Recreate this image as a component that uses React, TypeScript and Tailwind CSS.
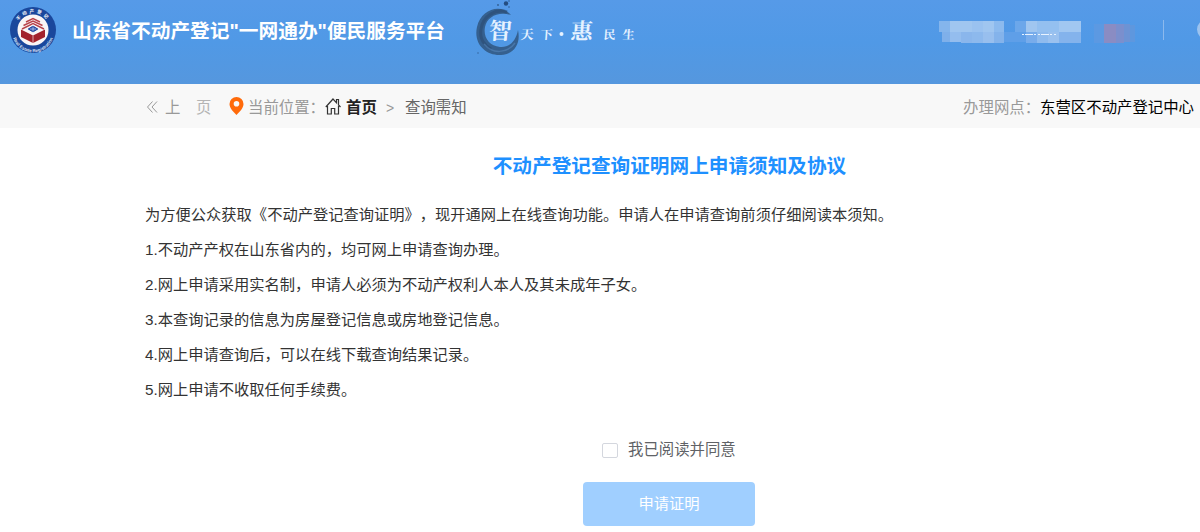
import { useState } from 'react'

const NOTICES = [
  '为方便公众获取《不动产登记查询证明》，现开通网上在线查询功能。申请人在申请查询前须仔细阅读本须知。',
  '1.不动产产权在山东省内的，均可网上申请查询办理。',
  '2.网上申请采用实名制，申请人必须为不动产权利人本人及其未成年子女。',
  '3.本查询记录的信息为房屋登记信息或房地登记信息。',
  '4.网上申请查询后，可以在线下载查询结果记录。',
  '5.网上申请不收取任何手续费。'
]

// Masked user info: x, y, width, height, fill
const MASK: [number, number, number, number, string][] = [
  [0, 0, 11, 11, '#84b5ec'],
  [11, 0, 22, 11, '#a0c6f0'],
  [33, 0, 11, 11, '#9ac2f0'],
  [44, 0, 11, 11, '#a0c6f0'],
  [55, 0, 10, 11, '#8cbaee'],
  [3, 11, 8, 10, '#7fb0ea'],
  [11, 11, 11, 10, '#94bdee'],
  [22, 11, 11, 11, '#8ab6ec'],
  [33, 11, 11, 11, '#8db9ed'],
  [44, 11, 11, 11, '#98bfee'],
  [55, 11, 10, 11, '#84b3eb'],
  [65, 11, 22, 10, '#5f9fe8'],
  [76, 0, 11, 11, '#6ca7ea'],
  [87, 0, 11, 11, '#a0c6f0'],
  [98, 0, 22, 11, '#94c0f0'],
  [120, 0, 22, 11, '#a1c7f1'],
  [87, 11, 11, 11, '#78aceb'],
  [98, 11, 11, 11, '#8fbbee'],
  [109, 11, 11, 11, '#9ac1ef'],
  [120, 11, 22, 11, '#84b3ec'],
  [155, 3, 10, 19, '#5c99e2'],
  [165, 3, 12, 19, '#8a8cc3'],
  [177, 3, 8, 19, '#7b8fcd'],
  [185, 3, 6, 18, '#6d93d4'],
  [191, 4, 5, 17, '#5e97de']
]

function Emblem() {
  return (
    <svg className="w-[46px] h-[46px] shrink-0" viewBox="0 0 46 46">
      <defs>
        <path id="arcTop" d="M6.500 22a16.500 16.500 0 0 1 33 0" />
        <path id="arcBottom" d="M1.700 24a21.300 21.300 0 0 0 42.600 0" />
      </defs>
      <circle cx="23" cy="23" r="23" fill="#1a479c" />
      <circle cx="23" cy="23" r="15.500" fill="#faf5f6" />
      <text fontSize="4.500" fontWeight="700" fill="#fff" letterSpacing="2.500" textAnchor="middle">
        <textPath href="#arcTop" startOffset="50%">不动产登记</textPath>
      </text>
      <text fontSize="4.500" fontWeight="700" fill="#d5e0f6" textAnchor="middle">
        <textPath href="#arcBottom" startOffset="50%">Real Estate Registration</textPath>
      </text>
      <g fill="none" stroke="#b8434b" strokeWidth="1.400">
        <path d="M16 15l7-3.500 7 3.500" />
        <path d="M13.500 18.500l9.500-4.500 9.500 4.500" />
        <path d="M12 22l11-5.500L34 22" />
      </g>
      <path d="M11 22.500l12 6v7.500l-12-6zM35 22.500l-12 6v7.500l12-6z" fill="#a3222d" />
      <path d="M23 28.500v7.500" stroke="#e9c4c9" strokeWidth="0.8" />
      <path d="M23 18l6.500 4-6.500 4-6.500-4z" fill="#2a4fa6" stroke="#fff" />
      <path d="M23 19.500v5M20 22h6" stroke="#dce6ff" strokeWidth="0.6" />
    </svg>
  )
}

function Slogan() {
  return (
    <svg className="w-[164px] h-[60px] shrink-0" viewBox="0 0 164 60">
      <path
        d="M35 15C25 3 5 9 1 27C-3 45 11 56 25 55C38 54 45 44 42 30C40 41 33 48 24 47C13 46 7 37 9 27C11 17 22 11 35 15Z"
        fill="#35608f"
      />
      <path d="M31 12C20 8 7 16 5 29C3 39 9 46 15 49" fill="none" stroke="#29486f" strokeWidth="3" opacity="0.55" />
      <path d="M8 44C16 54 31 54 39 43" fill="none" stroke="#5586bb" strokeWidth="1.500" opacity="0.6" />
      <circle cx="30" cy="3.500" r="2.200" fill="#244d80" />
      <circle cx="22" cy="5" r="0.900" fill="#315d91" />
      <circle cx="33" cy="1" r="0.800" fill="#315d91" />
      <circle cx="33" cy="7" r="0.800" fill="#315d91" />
      <circle cx="2" cy="53" r="0.700" fill="#315d91" />
      <g
        fill="#e6f2ff"
        fontWeight="700"
        className="font-['Liberation_Serif','Noto_Serif_CJK_SC','Noto_Sans_CJK_SC',serif]"
      >
        <text x="15" y="39" fontSize="23" transform="skewX(-4)">智</text>
        <text x="47" y="39.500" fontSize="13" transform="skewX(-4)">天</text>
        <text x="67" y="39.500" fontSize="12" transform="skewX(-4)">下</text>
        <circle cx="85.500" cy="34" r="2" />
        <text x="97" y="39.500" fontSize="22" transform="skewX(-4)">惠</text>
        <text x="130" y="39.500" fontSize="12" transform="skewX(-4)">民</text>
        <text x="149" y="39.500" fontSize="12" transform="skewX(-4)">生</text>
      </g>
    </svg>
  )
}

function Header() {
  return (
    <header className="flex h-[84px] bg-gradient-to-b from-[#569ae8] via-[#5099e6] to-[#5597de] text-white overflow-hidden">
      <div className="pl-[10px] pt-[7px]">
        <Emblem />
      </div>
      <h1 className="ml-4 mt-[15px] w-[404px] shrink-0 text-[19.7px] leading-8 font-bold whitespace-nowrap">
        山东省不动产登记"一网通办"便民服务平台
      </h1>
      <Slogan />
      <div className="flex-1" />
      <svg className="w-[196px] h-[23px] mt-[21px] shrink-0" viewBox="0 0 196 23" shapeRendering="crispEdges">
        {MASK.map(([x, y, w, h, fill], i) => (
          <rect key={i} x={x} y={y} width={w} height={h} fill={fill} />
        ))}
        <path d="M83 13.500h34" stroke="#e8f3ff" strokeWidth="1" strokeDasharray="2 1 8 1 2 2" />
      </svg>
      <div className="ml-[28px] mt-5 w-px h-5 bg-[#8cb9ed] shrink-0" />
      <div className="w-9 shrink-0 overflow-hidden">
        <div className="ml-[33px] mt-[19px] w-[21px] h-[21px] rounded-full bg-[#9cc3ef]" />
      </div>
    </header>
  )
}

function Breadcrumb() {
  return (
    <nav className="flex items-center h-11 bg-[#f8f8f8] pl-[146px] pr-[6px] pt-[3px] text-[15.4px] whitespace-nowrap text-[#999]">
      <svg className="w-3 h-3.5 mb-0.5 shrink-0" viewBox="0 0 12 14" fill="none" stroke="#999">
        <path d="M6.500 1.500l-5 5.500 5 5.500M11 1.500L6 7l5 5.500" />
      </svg>
      <span className="ml-[7px] w-[31px]">上</span>
      <span className="w-[33px] text-[#b4b4b4]">页</span>
      <svg className="w-[15px] h-[18px] mb-[3px] shrink-0" viewBox="0 0 14 18">
        <path
          fillRule="evenodd"
          d="M7 0a7 7 0 0 0-7 7c0 4 4 8 7 11 3-3 7-7 7-11a7 7 0 0 0-7-7zm0 4a2.800 2.800 0 1 1 0 5.600A2.800 2.800 0 0 1 7 4z"
          fill="#ff6a0a"
        />
      </svg>
      <span className="ml-1 w-[77px]">当前位置：</span>
      <svg className="w-4 h-[17px] mb-[3px] shrink-0" viewBox="0 0 16 17" fill="none" stroke="#333" strokeWidth="1.200">
        <path d="M.8 9L8 1l3.500 3.800V1.500h2V7l2 2M2.500 8v8h3.800v-5.500h3.400V16h3.800V8" />
      </svg>
      <a className="ml-[5px] w-[40px] font-bold text-[#222]">首页</a>
      <span className="w-[19px] text-sm">&gt;</span>
      <span className="text-[#666]">查询需知</span>
      <span className="ml-auto">办理网点：</span>
      <span className="text-black">东营区不动产登记中心</span>
    </nav>
  )
}

export default function App() {
  const [agreed, setAgreed] = useState(false)

  return (
    <div className="w-[1200px] h-[532px] overflow-hidden bg-white font-['Liberation_Sans','Noto_Sans_CJK_SC',sans-serif] [text-spacing-trim:space-all]">
      <Header />
      <Breadcrumb />
      <main className="pl-[145px]">
        <h2 className="pt-[22px] w-[1049px] text-center text-[19.65px] leading-8 font-bold text-[#1e90ff]">
          不动产登记查询证明网上申请须知及协议
        </h2>
        <div className="mt-[15px] text-[15.27px] leading-[35px] text-[#333] whitespace-nowrap">
          {NOTICES.map((line) => (
            <p key={line}>{line}</p>
          ))}
        </div>
        <label className="flex items-center mt-[31px] ml-[457px] h-6 text-[15.4px] text-[#606266]">
          <input
            type="checkbox"
            checked={agreed}
            onChange={(e) => setAgreed(e.target.checked)}
            className="appearance-none w-4 h-[15px] mr-[10px] border border-[#d4d7de] rounded-[2px] bg-white"
          />
          我已阅读并同意
        </label>
        <button
          disabled={!agreed}
          className="block mt-5 ml-[438px] w-[172px] h-11 rounded bg-[#409eff] disabled:bg-[#a0cfff] text-[15.3px] text-white"
        >
          申请证明
        </button>
      </main>
    </div>
  )
}
